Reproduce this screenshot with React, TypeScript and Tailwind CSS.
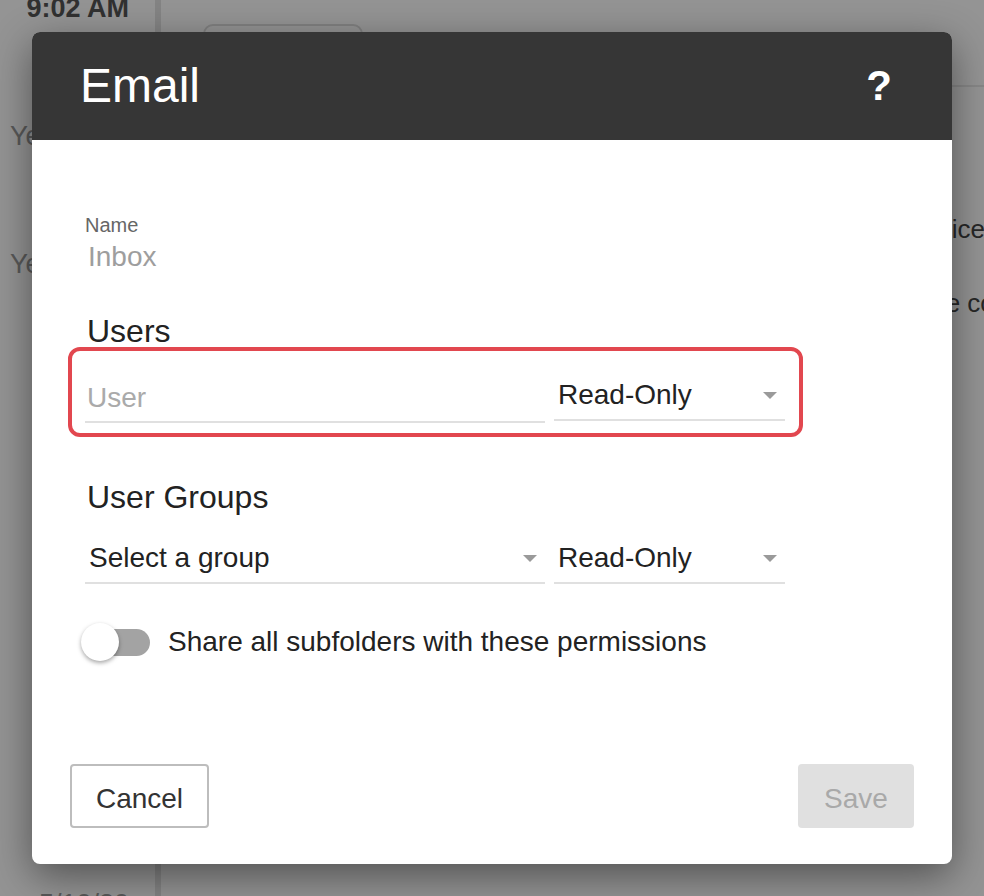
import { useState } from "react";

function Caret() {
  return (
    <svg width="14" height="7" viewBox="0 0 14 7" className="shrink-0">
      <polygon points="0,0 14,0 7,7" fill="#9a9a9a" />
    </svg>
  );
}

function SelectField({ label, width, muted }: { label: string; width: string; muted?: boolean }) {
  return (
    <div className={`${width} flex items-center justify-between border-b-2 border-[#e0e0e0] pl-[4px] pr-[8px] pb-[8px]`}>
      <span className={`text-[28px] leading-[32px] ${muted ? "text-[#9e9e9e]" : "text-[#222]"}`}>{label}</span>
      <Caret />
    </div>
  );
}

// page sitting behind the modal
function Background() {
  const days = ["Yesterday", "Yesterday", "Mon", "Sun", "Sat", "Fri", "5/10/20"];
  return (
    <div className="flex h-[896px] overflow-hidden bg-white font-['Liberation_Sans',Arial,sans-serif]">
      <aside className="w-[161px] shrink-0 border-r-[6px] border-[#e4e4e4] pr-[26px] text-right">
        <div className="-mt-[8px] text-[27px] font-bold leading-[32px] text-[#555]">9:02 AM</div>
        {days.map((d, i) => (
          <div key={i} className="mt-[96px] text-[27px] leading-[32px] text-[#999] whitespace-nowrap">
            {d}
          </div>
        ))}
      </aside>
      <main className="flex-1 min-w-0">
        <div className="h-[87px] border-b-2 border-[#e8e8e8] pl-[42px] pt-[24px]">
          <div className="h-[56px] w-[160px] rounded-[10px] border-2 border-[#ddd]" />
        </div>
        <div className="pt-[126px] whitespace-nowrap text-[26px] leading-[32px] text-[#444]">
          <div className="text-right -mr-[1px]">Monthly invoice</div>
          <div className="mt-[42px] pl-[763px]">the company</div>
        </div>
      </main>
    </div>
  );
}

export default function App() {
  const [shareAll, setShareAll] = useState(false);

  return (
    <div className="relative h-[896px] w-[984px] overflow-hidden font-['Liberation_Sans',Arial,sans-serif]">
      <Background />
      <div className="absolute inset-0 bg-black/[0.42]" />

      <div className="absolute inset-0 flex justify-center pt-[32px]">
        <div className="flex h-[832px] w-[920px] flex-col overflow-hidden rounded-[8px] bg-white shadow-[0_12px_40px_rgba(0,0,0,0.45)]">
          {/* header */}
          <div className="flex h-[108px] shrink-0 items-center justify-between bg-[#363636] pl-[48px] pr-[60px]">
            <h1 className="text-[48px] leading-none text-white">Email</h1>
            <span className="text-[42px] font-bold leading-none text-white">?</span>
          </div>

          {/* body */}
          <div className="flex-1 pl-[53px] pr-[167px] pt-[73px]">
            <div className="text-[20px] leading-[24px] text-[#666]">Name</div>
            <div className="mt-[4px] pl-[3px] text-[28px] leading-[32px] text-[#9e9e9e]">Inbox</div>

            <h2 className="mt-[40px] pl-[2px] text-[32px] leading-[36px] text-[#222]">Users</h2>
            <div className="relative mt-[30px] flex items-start gap-[9px]">
              <div className="pointer-events-none absolute -top-[32px] -bottom-[14px] -left-[17px] -right-[18px] rounded-[12px] border-4 border-[#e2474f]" />
              <div className="mt-[3px] w-[460px] border-b-2 border-[#e0e0e0] pl-[2px] pb-[7px]">
                <span className="text-[28px] leading-[32px] text-[#aaa]">User</span>
              </div>
              <SelectField label="Read-Only" width="w-[231px]" />
            </div>

            <h2 className="mt-[56px] pl-[2px] text-[32px] leading-[36px] text-[#222]">User Groups</h2>
            <div className="mt-[27px] flex items-start gap-[9px]">
              <SelectField label="Select a group" width="w-[460px]" />
              <SelectField label="Read-Only" width="w-[231px]" />
            </div>

            <div className="mt-[38px] flex items-center gap-[17px]">
              <button
                type="button"
                onClick={() => setShareAll(!shareAll)}
                className="relative h-[40px] w-[66px] shrink-0"
              >
                <span className="absolute left-[15px] top-[7px] h-[27px] w-[50px] rounded-full bg-[#a3a3a3]" />
                <span
                  className={`absolute top-[1px] h-[38px] w-[38px] rounded-full bg-white shadow-[0_2px_4px_rgba(0,0,0,0.35)] ${
                    shareAll ? "left-[28px]" : "-left-[4px]"
                  }`}
                />
              </button>
              <span className="text-[28px] leading-[32px] text-[#222]">Share all subfolders with these permissions</span>
            </div>
          </div>

          {/* footer */}
          <div className="flex shrink-0 items-center justify-between px-[38px] pb-[36px]">
            <button
              type="button"
              className="h-[64px] w-[139px] rounded-[4px] border-2 border-[#bdbdbd] bg-white pt-[5px] text-[28px] text-[#333]"
            >
              Cancel
            </button>
            <button
              type="button"
              disabled
              className="h-[64px] w-[116px] rounded-[4px] bg-[#e0e0e0] pt-[5px] text-[28px] text-[#a9a9a9]"
            >
              Save
            </button>
          </div>
        </div>
      </div>
    </div>
  );
}
